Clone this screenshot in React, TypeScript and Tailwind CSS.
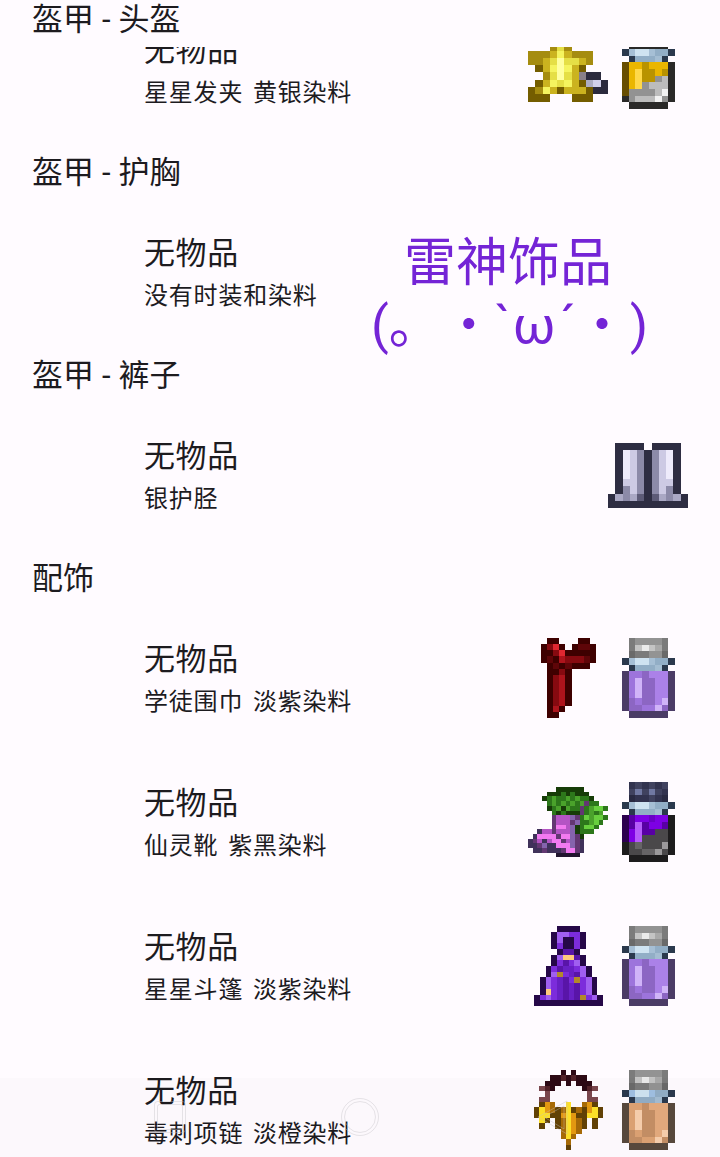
type Palette = Record<string, string>;

type Art = {
  rows: string[];
  colors: Palette;
  width: number;
  height: number;
};

type Item = {
  note: string;
  sprites: Art[];
};

const bottleRows = [
  ".gGGGGg.",
  ".gHWHAg.",
  ".sggGGs.",
  "NbccbeeN",
  ".NeeefN.",
  "DmmdlllT",
  "DmLddllT",
  "DmLddllT",
  "DmLddllT",
  "DdmddlLT",
  "BddmmLdB",
  ".BBBBBB.",
];

const silverLid: Palette = {
  g: "#7b7b7b",
  G: "#939393",
  H: "#c4c4c4",
  W: "#eaeaea",
  A: "#a9a9a9",
  s: "#6a6a6a",
  N: "#2b394d",
  b: "#a6bfd5",
  c: "#cfe3f1",
  e: "#92aec6",
  f: "#a4bdd2",
};

const lilacDye: Art = {
  rows: bottleRows,
  colors: { ...silverLid, D: "#4b3c66", T: "#4b3c66", B: "#4b3c66", m: "#9d74dc", d: "#8c66c3", l: "#ab81e8", L: "#d0b4f8" },
  width: 53,
  height: 80,
};

const peachDye: Art = {
  rows: bottleRows,
  colors: { ...silverLid, b: "#a0c0e2", D: "#59493d", T: "#59493d", B: "#59493d", m: "#dda274", d: "#c58f66", l: "#e4aa7e", L: "#f7cfae" },
  width: 53,
  height: 80,
};

const purpleBlackDye: Art = {
  rows: [
    ".gGgGgG.",
    ".GHGHGg.",
    ".sggGgs.",
    "NbccbeeN",
    ".NeeefN.",
    "DpvvqvvK",
    "DpLpvvpK",
    "DvLppkkK",
    "DvLkkkkK",
    "KktkkkhK",
    "KkktthkK",
    ".KKKKKK.",
  ],
  colors: {
    ...silverLid,
    g: "#32334f",
    G: "#40425f",
    H: "#7078a2",
    s: "#292a42",
    D: "#2c004e",
    K: "#1d1c1d",
    p: "#5800a4",
    q: "#6a00c6",
    v: "#7d00e4",
    L: "#b55cfa",
    k: "#4a484a",
    t: "#666466",
    h: "#9b999b",
  },
  width: 53,
  height: 80,
};

const yellowSilverDye: Art = {
  rows: [
    ".KKKKKK.",
    ".KKKKKK.",
    ".KKKKKK.",
    "NbccbeeN",
    ".NeeefN.",
    "DyyoyyyK",
    "DyYooyoK",
    "DyYoosSK",
    "DyYsSSSK",
    "DssssSWK",
    "KsSSSWsK",
    ".KKKKKK.",
  ],
  colors: {
    ...silverLid,
    K: "#2a2928",
    D: "#674d00",
    y: "#eab600",
    Y: "#ffd84a",
    o: "#b99300",
    s: "#929292",
    S: "#bcbcbc",
    W: "#f2f2f2",
  },
  width: 53,
  height: 80,
};

const starHairpin: Art = {
  rows: [
    "....o......",
    "...oyo.....",
    "ooocYcooo..",
    "oocyWyyco..",
    ".dcYWYcd...",
    "..oyWycgKK.",
    ".dcYyYcdsSK",
    "doYcdcccdKK",
    "ddd...ddd..",
  ],
  colors: {
    o: "#a58c10",
    d: "#745d00",
    c: "#cbb31f",
    y: "#e5df46",
    Y: "#f5f45f",
    W: "#ffffa0",
    g: "#898088",
    s: "#adadc2",
    S: "#d1d0ea",
    K: "#2b2a3d",
  },
  width: 80,
  height: 65.5,
};

const silverGreaves: Art = {
  rows: [
    ".DDDD.DDDD.",
    ".DWLGDGLWD.",
    ".DWLGDGLWD.",
    ".DWLGDGLWD.",
    ".DWLGDGLWD.",
    ".DLLGDGLLD.",
    ".DGLGDGLGD.",
    "DmGmdDdmGmD",
    "DDDDDDDDDDD",
  ],
  colors: { D: "#2e2d42", W: "#eeebfb", L: "#cdcae4", G: "#8c8aa8", m: "#aaa8c4", d: "#5d5b77" },
  width: 80,
  height: 65,
};

const apprenticeScarf: Art = {
  rows: [
    ".DD...DD.",
    "DmRD.DddD",
    "DDmRDDDDD",
    "DdDrmmmdD",
    ".DdDdDDD.",
    ".DDmD....",
    ".DmrD....",
    ".DmrD....",
    ".DmrD....",
    ".DmrD....",
    ".DmrD....",
    ".DrD.....",
    ".DD......",
  ],
  colors: { D: "#3e0000", d: "#5e0508", m: "#860a10", r: "#ad141c", R: "#df2730" },
  width: 55,
  height: 80,
};

const fairyBoots: Art = {
  rows: [
    "......DDDDDD.....",
    "....DDDGDGDDD....",
    "...DGgGGgGgGGD...",
    "....GgGgGgGgpGG..",
    "....DGgDgGGpGgllG",
    ".....GDGDDDpGgGg.",
    ".....pvvvapGlgllG",
    ".....pvvvpaGGglG.",
    ".....pVVvaDGllG..",
    "..nvvpvvvaDGGG...",
    ".nVVVVpVVapD.....",
    "npvnvVVpvapn.....",
    "nnpannVVVapn.....",
    ".nnpnnnpVVpn.....",
    "......PPPPP......",
  ],
  colors: {
    D: "#173c08",
    G: "#2d771b",
    g: "#4aa22b",
    l: "#68cf3e",
    p: "#633772",
    v: "#b454c4",
    V: "#f27af0",
    a: "#8563ac",
    n: "#40315a",
    P: "#22152f",
  },
  width: 80,
  height: 70.6,
};

const starCloak: Art = {
  rows: [
    "....DDDD....",
    "...DllppD...",
    "...DlDDpD...",
    "...DpDDpD...",
    "....DvvD....",
    "...DlyyvD...",
    "...DpvplD...",
    "..DpvmmplD..",
    "..DlopmvlD..",
    ".DlpmvpoplD.",
    ".DlpmvmvplD.",
    ".DypmvmvplD.",
    "DplpmvmvoplD",
    "DDDDDDDDDDDD",
  ],
  colors: { D: "#260848", v: "#5915a8", m: "#6820c4", p: "#7c2cdb", l: "#a05ff0", y: "#ffc97c", o: "#b38a2a" },
  width: 69,
  height: 80,
};

const stingerNecklace: Art = {
  rows: [
    ".....K.K.....",
    "...KKkKkKK...",
    "..KKK.K.KKK..",
    ".bkK.....Kkb.",
    "..b.......b..",
    ".bb.......bb.",
    ".dOo..Y..oOd.",
    "dYOodoYdodOYd",
    "dYYddOYOddYYd",
    ".Yd.doYOod.d.",
    ".d..doYOod.d.",
    ".....oYOo....",
    ".....oYo.....",
    "......o......",
    "......d......",
  ],
  colors: { K: "#2d0a15", k: "#522229", b: "#7b474d", d: "#634206", o: "#a86c08", O: "#e69a12", Y: "#ffe229" },
  width: 69,
  height: 80,
};

const accessories: Item[] = [
  { note: "学徒围巾 淡紫染料", sprites: [apprenticeScarf, lilacDye] },
  { note: "仙灵靴 紫黑染料", sprites: [fairyBoots, purpleBlackDye] },
  { note: "星星斗篷 淡紫染料", sprites: [starCloak, lilacDye] },
  { note: "毒刺项链 淡橙染料", sprites: [stingerNecklace, peachDye] },
];

const Sprite = ({ rows, colors, width, height }: Art) => (
  <svg
    width={width}
    height={height}
    viewBox={`0 0 ${rows[0].length} ${rows.length}`}
    preserveAspectRatio="none"
    shapeRendering="crispEdges"
  >
    {rows.map((row, y) =>
      [...row].map((cell, x) =>
        cell === "." ? null : <rect key={`${x}-${y}`} x={x} y={y} width="1" height="1" fill={colors[cell]} />
      )
    )}
  </svg>
);

const SectionHeader = ({ children }: { children: string }) => (
  <h2 className="h-[59px] shrink-0 px-8 pt-0.5 text-[31px] leading-[59px] tracking-[0.1px]">{children}</h2>
);

const ItemRow = ({ note, sprites }: Item) => (
  <div className="flex h-36 shrink-0 items-center pl-36 pr-8">
    <div className="flex-1 pt-px">
      <p className="text-[31px] leading-[46px] tracking-[0.6px]">无物品</p>
      <p className="text-[24px] leading-[38px] tracking-[0.8px] [word-spacing:3px]">{note}</p>
    </div>
    {sprites.map((sprite, i) => (
      <div key={i} className="flex size-20 items-center justify-center">
        <Sprite {...sprite} />
      </div>
    ))}
  </div>
);

const NavigationBar = () => (
  <div className="absolute inset-x-0 bottom-0 h-[79px] bg-black/[0.01]">
    <svg className="size-full" viewBox="0 0 720 79" fill="none">
      <g stroke="#c4c1c6" strokeOpacity="0.4">
        <rect x="154.500" y="23.500" width="31" height="31" rx="3" />
        <rect x="157.500" y="26.500" width="25" height="25" rx="2" />
        <circle cx="360" cy="39" r="18.500" />
        <circle cx="360" cy="39" r="15.500" />
        <path d="M567 23 L538 39 L567 56 Z M564 28 L544 39 L564 51 Z" />
      </g>
    </svg>
  </div>
);

const App = () => {
  return (
    <main className="relative flex h-[1157px] w-[720px] flex-col overflow-hidden bg-[#fffbff] font-['Roboto','Noto_Sans_CJK_SC',sans-serif] text-[#1d1b1f]">
      <div className="flex h-[47px] shrink-0 flex-col justify-end overflow-hidden">
        <SectionHeader>盔甲 - 头盔</SectionHeader>
      </div>
      <div className="flex h-[94px] shrink-0 flex-col justify-end overflow-hidden">
        <ItemRow note="星星发夹 黄银染料" sprites={[starHairpin, yellowSilverDye]} />
      </div>

      <SectionHeader>盔甲 - 护胸</SectionHeader>
      <ItemRow note="没有时装和染料" sprites={[]} />

      <SectionHeader>盔甲 - 裤子</SectionHeader>
      <ItemRow note="银护胫" sprites={[silverGreaves]} />

      <SectionHeader>配饰</SectionHeader>
      {accessories.map((item) => (
        <ItemRow key={item.note} {...item} />
      ))}

      <div className="absolute left-[308px] top-[233px] w-[400px] text-center text-[52px] leading-[62px] text-[#7424d6]">
        <p>雷神饰品</p>
        <p className="whitespace-pre pl-[3px] [word-spacing:-11px]">
          (。 ・`<span className="ml-0.5 mr-1">ω</span>´・<span className="ml-0.5">)</span>
        </p>
      </div>

      <NavigationBar />
    </main>
  );
};

export default App;
